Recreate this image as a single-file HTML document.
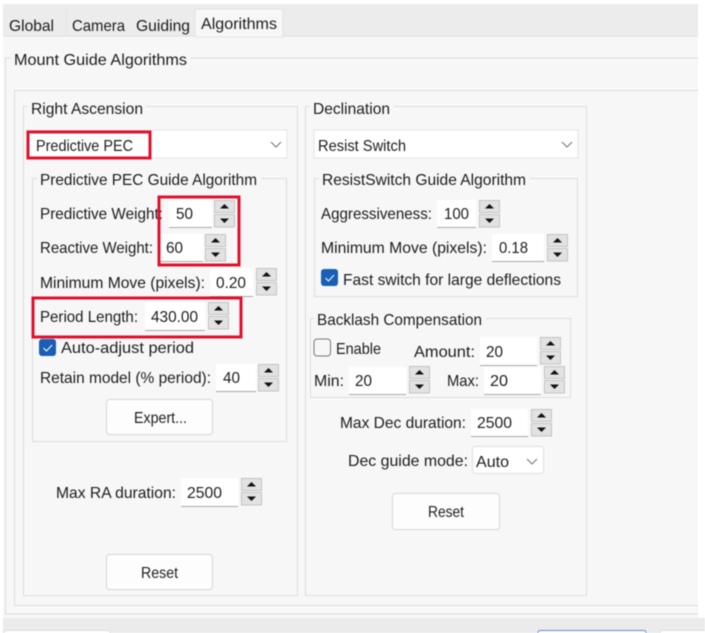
<!DOCTYPE html>
<html><head><meta charset="utf-8">
<style>
html,body{margin:0;padding:0;background:#fff;width:705px;height:633px;overflow:hidden}
svg{display:block;filter:blur(.4px)}
text{font-family:"Liberation Sans",sans-serif;font-size:16px;fill:#1c1c1c}
.g{fill:none;stroke:#dcdcdc;stroke-width:1}
.i{fill:#fff}
.u{fill:#a8a8a8}
.r{fill:none;stroke:#e2102c;stroke-width:3}
.b{fill:#fdfdfd;stroke:#d6d6d6}
.c{fill:none;stroke:#777;stroke-width:1.1}
.s{fill:#e2e2e2;stroke:#c4c4c4}
</style></head><body>
<svg width="705" height="633" viewBox="0 0 705 633" xmlns="http://www.w3.org/2000/svg">
<defs>
<g id="sp">
<rect x=".5" y=".5" width="20" height="12" class="s"/><path d="M6 8.500L10.500 4L15 8.500Z" fill="#111"/>
<rect x=".5" y="14.500" width="20" height="12.500" class="s"/><path d="M6 18.500L10.500 23L15 18.500Z" fill="#111"/>
</g>
</defs>
<rect width="705" height="633" fill="#fff"/>
<rect x="3" y="4" width="695" height="32" fill="#ececec"/>
<rect x="3" y="36" width="695" height="582" fill="#f7f7f7"/>
<rect x="3" y="618" width="702" height="15" fill="#ebebeb"/>
<path d="M3 36H698" stroke="#dfdfdf"/>
<rect x="66" y="9" width="1" height="27" fill="#e2e2e2"/>
<rect x="195" y="9" width="88" height="28" fill="#f7f7f7" stroke="#e2e2e2"/>
<text x="9" y="31" textLength="45" lengthAdjust="spacingAndGlyphs">Global</text>
<text x="72" y="31" textLength="53" lengthAdjust="spacingAndGlyphs">Camera</text>
<text x="136" y="31" textLength="54" lengthAdjust="spacingAndGlyphs">Guiding</text>
<text x="201" y="29" textLength="76" lengthAdjust="spacingAndGlyphs">Algorithms</text>

<path d="M5.500 614V58H698" class="g"/><path d="M5 614H698" class="g"/>
<rect x="11" y="50" width="180" height="16" fill="#f7f7f7"/>
<text x="14" y="65" textLength="173" lengthAdjust="spacingAndGlyphs">Mount Guide Algorithms</text>
<path d="M14.500 605V90.500H698M14.500 605.500H698" class="g"/>

<rect x="23.500" y="106.500" width="274" height="489" class="g"/>
<rect x="28" y="100" width="118" height="14" fill="#f7f7f7"/>
<text x="31" y="114" textLength="112" lengthAdjust="spacingAndGlyphs">Right Ascension</text>
<rect x="27" y="130" width="260" height="28" class="i" stroke="#e4e4e4"/>
<text x="36" y="151" textLength="97" lengthAdjust="spacingAndGlyphs">Predictive PEC</text>
<path d="M271 142L276 147L281 142" class="c"/>

<rect x="32.500" y="178.500" width="254" height="263" class="g"/>
<rect x="37" y="172" width="224" height="14" fill="#f7f7f7"/>
<text x="40" y="185" textLength="217" lengthAdjust="spacingAndGlyphs">Predictive PEC Guide Algorithm</text>

<text x="40" y="219" textLength="123" lengthAdjust="spacingAndGlyphs">Predictive Weight:</text>
<rect x="169" y="200" width="43" height="27" class="i"/><rect x="169" y="227" width="43" height="1" class="u"/>
<text x="176" y="219" textLength="17" lengthAdjust="spacingAndGlyphs">50</text>
<use href="#sp" x="214" y="200"/>

<text x="40" y="253" textLength="113" lengthAdjust="spacingAndGlyphs">Reactive Weight:</text>
<rect x="160" y="234" width="43" height="27" class="i"/><rect x="160" y="261" width="43" height="1" class="u"/>
<text x="166" y="253" textLength="17" lengthAdjust="spacingAndGlyphs">60</text>
<use href="#sp" x="205" y="234"/>

<text x="40" y="288" textLength="165" lengthAdjust="spacingAndGlyphs">Minimum Move (pixels):</text>
<rect x="210" y="268" width="43" height="28" class="i"/><rect x="210" y="296" width="43" height="1" class="u"/>
<text x="216" y="288" textLength="30" lengthAdjust="spacingAndGlyphs">0.20</text>
<use href="#sp" x="256" y="268"/>

<text x="40" y="322" textLength="98" lengthAdjust="spacingAndGlyphs">Period Length:</text>
<rect x="145" y="302" width="60" height="28" class="i"/><rect x="145" y="330" width="60" height="1" class="u"/>
<text x="151" y="322" textLength="47" lengthAdjust="spacingAndGlyphs">430.00</text>
<use href="#sp" x="208" y="302"/>

<rect x="39" y="339" width="17" height="17" rx="3" fill="#1a5fb4"/>
<path d="M43.500 348L46.500 351L52 345" fill="none" stroke="#fff" stroke-width="1"/>
<text x="61" y="353" textLength="133" lengthAdjust="spacingAndGlyphs">Auto-adjust period</text>

<text x="40" y="383" textLength="171" lengthAdjust="spacingAndGlyphs">Retain model (% period):</text>
<rect x="216" y="364" width="40" height="27" class="i"/><rect x="216" y="391" width="40" height="1" class="u"/>
<text x="223" y="383" textLength="17" lengthAdjust="spacingAndGlyphs">40</text>
<use href="#sp" x="258" y="364"/>

<rect x="106.500" y="399.500" width="106" height="35" rx="3" class="b"/>
<text x="134" y="423" textLength="53" lengthAdjust="spacingAndGlyphs">Expert...</text>

<text x="56" y="498" textLength="120" lengthAdjust="spacingAndGlyphs">Max RA duration:</text>
<rect x="181" y="478" width="57" height="28" class="i"/><rect x="181" y="506" width="57" height="1" class="u"/>
<text x="187" y="498" textLength="35" lengthAdjust="spacingAndGlyphs">2500</text>
<use href="#sp" x="241" y="478"/>

<rect x="106.500" y="554.500" width="106" height="35" rx="3" class="b"/>
<text x="141" y="578" textLength="37" lengthAdjust="spacingAndGlyphs">Reset</text>

<rect x="305.500" y="106.500" width="281" height="489" class="g"/>
<rect x="310" y="100" width="84" height="14" fill="#f7f7f7"/>
<text x="313" y="114" textLength="77" lengthAdjust="spacingAndGlyphs">Declination</text>
<rect x="314" y="130" width="264" height="28" class="i" stroke="#e4e4e4"/>
<text x="318" y="151" textLength="88" lengthAdjust="spacingAndGlyphs">Resist Switch</text>
<path d="M562 142L567 147L572 142" class="c"/>

<rect x="314.500" y="178.500" width="263" height="118" class="g"/>
<rect x="319" y="172" width="211" height="14" fill="#f7f7f7"/>
<text x="322" y="185" textLength="204" lengthAdjust="spacingAndGlyphs">ResistSwitch Guide Algorithm</text>

<text x="321" y="219" textLength="111" lengthAdjust="spacingAndGlyphs">Aggressiveness:</text>
<rect x="437" y="200" width="39" height="27" class="i"/><rect x="437" y="227" width="39" height="1" class="u"/>
<text x="444" y="219" textLength="25" lengthAdjust="spacingAndGlyphs">100</text>
<use href="#sp" x="479" y="200"/>

<text x="321" y="253" textLength="166" lengthAdjust="spacingAndGlyphs">Minimum Move (pixels):</text>
<rect x="492" y="234" width="52" height="27" class="i"/><rect x="492" y="261" width="52" height="1" class="u"/>
<text x="499" y="253" textLength="29" lengthAdjust="spacingAndGlyphs">0.18</text>
<use href="#sp" x="547" y="234"/>

<rect x="321" y="269" width="17" height="17" rx="3" fill="#1a5fb4"/>
<path d="M325.500 278L328.500 281L334 275" fill="none" stroke="#fff" stroke-width="1"/>
<text x="343" y="285" textLength="218" lengthAdjust="spacingAndGlyphs">Fast switch for large deflections</text>

<rect x="310.500" y="318.500" width="260" height="79" class="g"/>
<rect x="314" y="312" width="172" height="14" fill="#f7f7f7"/>
<text x="317" y="325" textLength="165" lengthAdjust="spacingAndGlyphs">Backlash Compensation</text>

<rect x="314" y="339" width="16.500" height="17" rx="3" fill="#f7f7f7" stroke="#777"/>
<text x="336" y="354" textLength="45" lengthAdjust="spacingAndGlyphs">Enable</text>

<text x="414" y="357" textLength="61" lengthAdjust="spacingAndGlyphs">Amount:</text>
<rect x="480" y="337" width="57" height="28" class="i"/><rect x="480" y="365" width="57" height="1" class="u"/>
<text x="486" y="357" textLength="17" lengthAdjust="spacingAndGlyphs">20</text>
<use href="#sp" x="540" y="337"/>

<text x="314" y="386" textLength="30" lengthAdjust="spacingAndGlyphs">Min:</text>
<rect x="349" y="367" width="57" height="27" class="i"/><rect x="349" y="394" width="57" height="1" class="u"/>
<text x="355" y="386" textLength="17" lengthAdjust="spacingAndGlyphs">20</text>
<use href="#sp" x="409" y="366"/>

<text x="447" y="386" textLength="32" lengthAdjust="spacingAndGlyphs">Max:</text>
<rect x="484" y="367" width="57" height="27" class="i"/><rect x="484" y="394" width="57" height="1" class="u"/>
<text x="490" y="386" textLength="18" lengthAdjust="spacingAndGlyphs">20</text>
<use href="#sp" x="544" y="366"/>

<text x="340" y="428" textLength="126" lengthAdjust="spacingAndGlyphs">Max Dec duration:</text>
<rect x="471" y="409" width="57" height="27" class="i"/><rect x="471" y="436" width="57" height="1" class="u"/>
<text x="477" y="428" textLength="35" lengthAdjust="spacingAndGlyphs">2500</text>
<use href="#sp" x="531" y="409"/>

<text x="348" y="466" textLength="120" lengthAdjust="spacingAndGlyphs">Dec guide mode:</text>
<rect x="472.500" y="446.500" width="71" height="27" rx="2" class="i" stroke="#e0e0e0"/>
<text x="476" y="467" textLength="33" lengthAdjust="spacingAndGlyphs">Auto</text>
<path d="M527 459L532 464L537 459" class="c"/>

<rect x="392.500" y="493.500" width="107" height="36" rx="3" class="b"/>
<text x="428" y="517" textLength="36" lengthAdjust="spacingAndGlyphs">Reset</text>

<rect x="28" y="132" width="122" height="26" class="r"/>
<rect x="159" y="197" width="80" height="68" class="r"/>
<rect x="33" y="298" width="208" height="39" class="r"/>

<rect x="4" y="630.500" width="106" height="6" rx="2" fill="#fff" stroke="#dcdcdc"/>
<rect x="538" y="630.500" width="108" height="6" rx="2" fill="#fff" stroke="#5b8fd0"/>
<rect x="660" y="630.500" width="50" height="6" rx="2" fill="#fff" stroke="#dcdcdc"/>
</svg>
</body></html>
